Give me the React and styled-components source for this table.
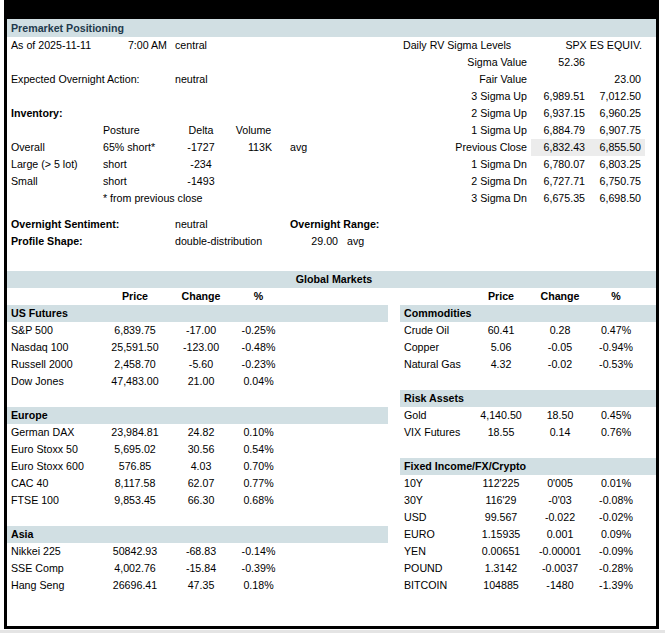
import React from "react";
import styled, { createGlobalStyle } from "styled-components";

const GlobalStyle = createGlobalStyle`
  html, body {
    margin: 0;
    padding: 0;
    background: #fff;
  }
  body {
    font-family: "Liberation Sans", Arial, sans-serif;
    font-size: 8pt;
    color: #000;
  }
`;

const BAR = "#d1dfe3";

const Frame = styled.div`
  margin-left: 4px;
  width: 649px;
  height: 607px;
  border: 3px solid #000;
  border-top-width: 19px;
  background: #fff;
`;

const BottomEdge = styled.div`
  height: 3px;
  margin-top: 1px;
  background: #e4e4e4;
`;

const TitleBar = styled.div`
  height: 18px;
  line-height: 18px;
  padding-left: 4px;
  background: ${BAR};
  color: #1f3a4c;
  font-weight: 700;
`;

const Columns = styled.div`
  display: flex;
  align-items: flex-start;
  gap: ${(p) => p.$gap || 0}px;
`;

const Panel = styled.div`
  width: ${(p) => p.$w}px;
  flex: none;
`;

const Row = styled.div`
  display: flex;
  height: 17px;
  line-height: 17px;
  white-space: nowrap;
`;

const Cell = styled.div`
  flex: none;
  box-sizing: border-box;
  width: ${(p) => p.$w}px;
  padding: 0 ${(p) => p.$pr ?? 4}px 0 ${(p) => p.$pl ?? 4}px;
  text-align: ${(p) => p.$align || "left"};
  font-weight: ${(p) => (p.$bold ? 700 : 400)};
  background: ${(p) => (p.$shade ? "#ececec" : "transparent")};
`;

const Gap = styled.div`
  height: ${(p) => p.$h}px;
`;

const SectionBar = styled.div`
  height: 17px;
  line-height: 17px;
  padding-left: 4px;
  background: ${BAR};
  font-weight: 700;
  text-align: ${(p) => (p.$center ? "center" : "left")};
  padding-left: ${(p) => (p.$center ? 5 : 4)}px;
`;

const sigma = [
  ["Sigma Value", "52.36", ""],
  ["Fair Value", "", "23.00"],
  ["3 Sigma Up", "6,989.51", "7,012.50"],
  ["2 Sigma Up", "6,937.15", "6,960.25"],
  ["1 Sigma Up", "6,884.79", "6,907.75"],
  ["Previous Close", "6,832.43", "6,855.50", true],
  ["1 Sigma Dn", "6,780.07", "6,803.25"],
  ["2 Sigma Dn", "6,727.71", "6,750.75"],
  ["3 Sigma Dn", "6,675.35", "6,698.50"],
];

const inventory = [
  ["Overall", "65% short*", "-1727", "113K", "avg"],
  ["Large (> 5 lot)", "short", "-234", "", ""],
  ["Small", "short", "-1493", "", ""],
];

const leftMarkets = [
  {
    title: "US Futures",
    rows: [
      ["S&P 500", "6,839.75", "-17.00", "-0.25%"],
      ["Nasdaq 100", "25,591.50", "-123.00", "-0.48%"],
      ["Russell 2000", "2,458.70", "-5.60", "-0.23%"],
      ["Dow Jones", "47,483.00", "21.00", "0.04%"],
    ],
  },
  {
    title: "Europe",
    rows: [
      ["German DAX", "23,984.81", "24.82", "0.10%"],
      ["Euro Stoxx 50", "5,695.02", "30.56", "0.54%"],
      ["Euro Stoxx 600", "576.85", "4.03", "0.70%"],
      ["CAC 40", "8,117.58", "62.07", "0.77%"],
      ["FTSE 100", "9,853.45", "66.30", "0.68%"],
    ],
  },
  {
    title: "Asia",
    rows: [
      ["Nikkei 225", "50842.93", "-68.83", "-0.14%"],
      ["SSE Comp", "4,002.76", "-15.84", "-0.39%"],
      ["Hang Seng", "26696.41", "47.35", "0.18%"],
    ],
  },
];

const rightMarkets = [
  {
    title: "Commodities",
    rows: [
      ["Crude Oil", "60.41", "0.28", "0.47%"],
      ["Copper", "5.06", "-0.05", "-0.94%"],
      ["Natural Gas", "4.32", "-0.02", "-0.53%"],
    ],
  },
  {
    title: "Risk Assets",
    rows: [
      ["Gold", "4,140.50", "18.50", "0.45%"],
      ["VIX Futures", "18.55", "0.14", "0.76%"],
    ],
  },
  {
    title: "Fixed Income/FX/Crypto",
    rows: [
      ["10Y", "112'225", "0'005", "0.01%"],
      ["30Y", "116'29", "-0'03", "-0.08%"],
      ["USD", "99.567", "-0.022", "-0.02%"],
      ["EURO", "1.15935", "0.001", "0.09%"],
      ["YEN", "0.00651", "-0.00001", "-0.09%"],
      ["POUND", "1.3142", "-0.0037", "-0.28%"],
      ["BITCOIN", "104885", "-1480", "-1.39%"],
    ],
  },
];

function MarketTable({ groups, cols }) {
  const [a, b, c, d] = cols;
  return (
    <>
      <Row>
        <Cell $w={a} />
        <Cell $w={b} $align="center" $bold>Price</Cell>
        <Cell $w={c} $align="center" $bold>Change</Cell>
        <Cell $w={d} $align="center" $bold>%</Cell>
      </Row>
      {groups.map((g, i) => (
        <React.Fragment key={g.title}>
          {i > 0 && <Gap $h={17} />}
          <SectionBar>{g.title}</SectionBar>
          {g.rows.map((r) => (
            <Row key={r[0]}>
              <Cell $w={a}>{r[0]}</Cell>
              <Cell $w={b} $align="center">{r[1]}</Cell>
              <Cell $w={c} $align="center">{r[2]}</Cell>
              <Cell $w={d} $align="center">{r[3]}</Cell>
            </Row>
          ))}
        </React.Fragment>
      ))}
    </>
  );
}

export default function App() {
  return (
    <>
      <GlobalStyle />
      <Frame>
        <TitleBar>Premarket Positioning</TitleBar>
        <Columns>
          <Panel $w={381}>
            <Row>
              <Cell $w={92}>As of 2025-11-11</Cell>
              <Cell $w={72} $align="right">7:00 AM</Cell>
              <Cell $w={60}>central</Cell>
            </Row>
            <Gap $h={17} />
            <Row>
              <Cell $w={164}>Expected Overnight Action:</Cell>
              <Cell $w={60}>neutral</Cell>
            </Row>
            <Gap $h={17} />
            <Row>
              <Cell $w={92} $bold>Inventory:</Cell>
            </Row>
            <Row>
              <Cell $w={92} />
              <Cell $w={72}>Posture</Cell>
              <Cell $w={60} $align="center">Delta</Cell>
              <Cell $w={45} $align="center">Volume</Cell>
            </Row>
            {inventory.map((r) => (
              <Row key={r[0]}>
                <Cell $w={92}>{r[0]}</Cell>
                <Cell $w={72}>{r[1]}</Cell>
                <Cell $w={60} $align="center">{r[2]}</Cell>
                <Cell $w={45} $align="right">{r[3]}</Cell>
                <Cell $w={66} $pl={14}>{r[4]}</Cell>
              </Row>
            ))}
            <Row>
              <Cell $w={92} />
              <Cell $w={200}>* from previous close</Cell>
            </Row>
            <Gap $h={9} />
            <Row>
              <Cell $w={164} $bold>Overnight Sentiment:</Cell>
              <Cell $w={60}>neutral</Cell>
              <Cell $w={45} />
              <Cell $w={112} $pl={14} $bold>Overnight Range:</Cell>
            </Row>
            <Row>
              <Cell $w={164} $bold>Profile Shape:</Cell>
              <Cell $w={105}>double-distribution</Cell>
              <Cell $w={66} $align="right">29.00</Cell>
              <Cell $w={46} $pl={5}>avg</Cell>
            </Row>
          </Panel>
          <Panel $w={268}>
            <Row>
              <Cell $w={143} $pl={15}>Daily RV Sigma Levels</Cell>
              <Cell $w={114} $align="right" $pr={3}>SPX ES EQUIV.</Cell>
            </Row>
            {sigma.map((r) => (
              <Row key={r[0]}>
                <Cell $w={143} $align="right">{r[0]}</Cell>
                <Cell $w={58} $align="right" $shade={r[3]}>{r[1]}</Cell>
                <Cell $w={56} $align="right" $shade={r[3]}>{r[2]}</Cell>
              </Row>
            ))}
          </Panel>
        </Columns>
        <Gap $h={21} />
        <SectionBar $center>Global Markets</SectionBar>
        <Columns $gap={12}>
          <Panel $w={381}>
            <MarketTable groups={leftMarkets} cols={[92, 72, 60, 55]} />
          </Panel>
          <Panel $w={256}>
            <MarketTable groups={rightMarkets} cols={[67, 68, 50, 62]} />
          </Panel>
        </Columns>
      </Frame>
      <BottomEdge />
    </>
  );
}
